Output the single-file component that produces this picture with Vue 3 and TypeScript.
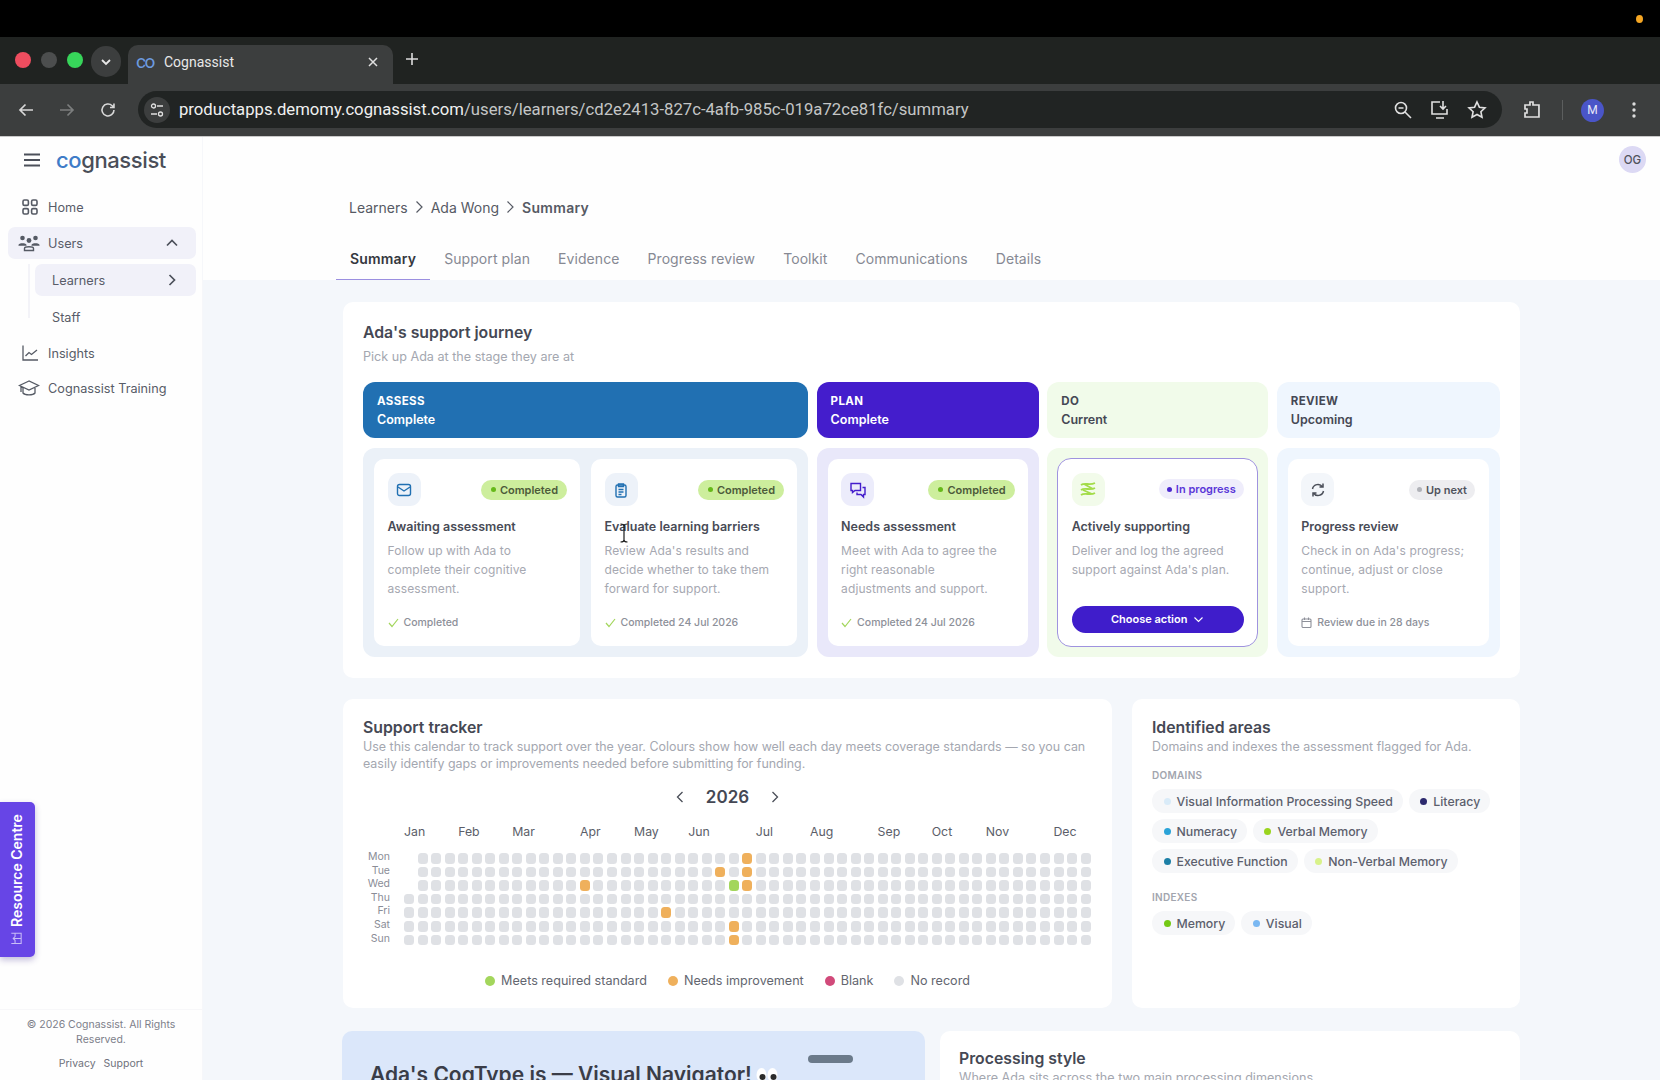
<script setup lang="ts">
type CardState = 'done' | 'active' | 'next'

interface JourneyCard {
  icon: string
  badge: string
  state: CardState
  title: string
  text: string
  foot?: string
}

interface Stage {
  key: string
  name: string
  status: string
  cards: JourneyCard[]
}

const tabs = ['Summary', 'Support plan', 'Evidence', 'Progress review', 'Toolkit', 'Communications', 'Details']

const stages: Stage[] = [
  {
    key: 'assess',
    name: 'ASSESS',
    status: 'Complete',
    cards: [
      {
        icon: 'mail',
        badge: 'Completed',
        state: 'done',
        title: 'Awaiting assessment',
        text: 'Follow up with Ada to complete their cognitive assessment.',
        foot: 'Completed',
      },
      {
        icon: 'clip',
        badge: 'Completed',
        state: 'done',
        title: 'Evaluate learning barriers',
        text: "Review Ada's results and decide whether to take them forward for support.",
        foot: 'Completed 24 Jul 2026',
      },
    ],
  },
  {
    key: 'plan',
    name: 'PLAN',
    status: 'Complete',
    cards: [
      {
        icon: 'chat',
        badge: 'Completed',
        state: 'done',
        title: 'Needs assessment',
        text: 'Meet with Ada to agree the right reasonable\nadjustments and support.',
        foot: 'Completed 24 Jul 2026',
      },
    ],
  },
  {
    key: 'do',
    name: 'DO',
    status: 'Current',
    cards: [
      {
        icon: 'wave',
        badge: 'In progress',
        state: 'active',
        title: 'Actively supporting',
        text: "Deliver and log the agreed support against Ada's plan.",
      },
    ],
  },
  {
    key: 'review',
    name: 'REVIEW',
    status: 'Upcoming',
    cards: [
      {
        icon: 'sync',
        badge: 'Up next',
        state: 'next',
        title: 'Progress review',
        text: "Check in on Ada's progress; continue, adjust or close support.",
        foot: 'Review due in 28 days',
      },
    ],
  },
]

const months = [
  ['Jan', 0], ['Feb', 4], ['Mar', 8], ['Apr', 13], ['May', 17], ['Jun', 21],
  ['Jul', 26], ['Aug', 30], ['Sep', 35], ['Oct', 39], ['Nov', 43], ['Dec', 48],
] as const

const days = ['Mon', 'Tue', 'Wed', 'Thu', 'Fri', 'Sat', 'Sun']

const marks: Record<string, string> = {
  '0-25': 'amber', '1-25': 'amber', '2-25': 'amber', '1-23': 'amber',
  '2-24': 'green', '2-13': 'amber', '4-19': 'amber', '5-24': 'amber', '6-24': 'amber',
}

function cellClass(row: number, col: number): string {
  if (col === 0 && row < 3) return 'empty'
  return marks[`${row}-${col}`] ?? ''
}

const legend = [
  ['green', 'Meets required standard'],
  ['amber', 'Needs improvement'],
  ['pink', 'Blank'],
  ['', 'No record'],
]

const domains = [
  ['#d9ebf8', 'Visual Information Processing Speed'],
  ['#2d2a6e', 'Literacy'],
  ['#2aa3d8', 'Numeracy'],
  ['#9ad41e', 'Verbal Memory'],
  ['#1c7fa6', 'Executive Function'],
  ['#d8f28a', 'Non-Verbal Memory'],
]

const indexes = [
  ['#74c914', 'Memory'],
  ['#7ab8f2', 'Visual'],
]
</script>

<template>
  <div class="screen">
    <div class="os-bar"><span class="os-dot"></span></div>

    <div class="tab-strip">
      <span class="light red"></span>
      <span class="light grey"></span>
      <span class="light lime"></span>
      <span class="tab-search">
        <svg width="14" height="14" viewBox="0 0 14 14"><path d="M3 5l4 4 4-4" fill="none" stroke="#e8e8e8" stroke-width="1.8" /></svg>
      </span>
      <div class="browser-tab">
        <span class="favicon">co</span>
        <span class="tab-title">Cognassist</span>
        <svg class="tab-close" width="12" height="12" viewBox="0 0 12 12"><path d="M2 2l8 8M10 2l-8 8" stroke="#e0e0e0" stroke-width="1.5" /></svg>
      </div>
      <svg class="tab-plus" width="14" height="14" viewBox="0 0 14 14"><path d="M7 1v12M1 7h12" stroke="#dcdcdc" stroke-width="1.6" /></svg>
    </div>

    <div class="toolbar">
      <svg class="nav-ico" width="18" height="18" viewBox="0 0 18 18"><path d="M16 9H3M8.5 3.5L3 9l5.5 5.5" fill="none" stroke="#d8d8d8" stroke-width="1.7" /></svg>
      <svg class="nav-ico" width="18" height="18" viewBox="0 0 18 18"><path d="M2 9h13M9.5 3.5L15 9l-5.5 5.5" fill="none" stroke="#7c7e7e" stroke-width="1.7" /></svg>
      <svg class="nav-ico" width="18" height="18" viewBox="0 0 18 18"><path d="M15 9a6 6 0 1 1-1.8-4.3L15 6.5M15 2.5v4h-4" fill="none" stroke="#d8d8d8" stroke-width="1.6" /></svg>
      <div class="address">
        <span class="site-info">
          <svg width="16" height="16" viewBox="0 0 16 16" fill="none" stroke="#e0e0e0" stroke-width="1.3">
            <circle cx="4.5" cy="4" r="2" /><path d="M8 4h6M2 12h6" /><circle cx="11.5" cy="12" r="2" />
          </svg>
        </span>
        <span class="url"><b>productapps.demomy.cognassist.com</b>/users/learners/cd2e2413-827c-4afb-985c-019a72ce81fc/summary</span>
        <span class="addr-icons">
          <svg width="20" height="20" viewBox="0 0 20 20" fill="none" stroke="#e0e0e0" stroke-width="1.6"><circle cx="8" cy="8" r="5.5" /><path d="M12 12l6 6M5.5 8h5" /></svg>
          <svg width="20" height="20" viewBox="0 0 20 20" fill="none" stroke="#e0e0e0" stroke-width="1.6"><path d="M10 2H2v12h15V9M6 18h8M13 1v8M10 6l3 3 3-3" /></svg>
          <svg width="20" height="20" viewBox="0 0 20 20" fill="none" stroke="#e0e0e0" stroke-width="1.6"><path d="M10 2l2.4 5.2 5.6.7-4.1 3.8 1.1 5.6-5-2.8-5 2.8 1.1-5.6L2 7.9l5.6-.7z" /></svg>
        </span>
      </div>
      <svg class="puzzle" width="20" height="20" viewBox="0 0 20 20" fill="none" stroke="#e0e0e0" stroke-width="1.7"><path d="M3 5h5V2h3v3h6v12H3v-4h2V9H3z" /></svg>
      <span class="tool-divider"></span>
      <span class="profile">M</span>
      <svg width="4" height="16" viewBox="0 0 4 16" fill="#dcdcdc"><circle cx="2" cy="2" r="1.7" /><circle cx="2" cy="8" r="1.7" /><circle cx="2" cy="14" r="1.7" /></svg>
    </div>

    <div class="app">
      <aside class="sidebar">
        <div class="brand">
          <svg width="16" height="14" viewBox="0 0 16 14"><path d="M0 1.5h16M0 7h16M0 12.5h16" stroke="#4c505a" stroke-width="1.9" /></svg>
          <span class="logo"><span class="logo-co">co</span>gnassist</span>
        </div>

        <nav class="nav">
          <a class="nav-row">
            <svg width="18" height="18" viewBox="0 0 18 18" fill="none" stroke="#555a64" stroke-width="1.6">
              <rect x="2" y="2" width="5.4" height="5.4" rx="1.4" /><rect x="10.6" y="2" width="5.4" height="5.4" rx="1.4" />
              <rect x="2" y="10.6" width="5.4" height="5.4" rx="1.4" /><rect x="10.6" y="10.6" width="5.4" height="5.4" rx="1.4" />
            </svg>
            Home
          </a>
          <a class="nav-row on">
            <svg width="22" height="18" viewBox="0 0 22 18" fill="#555a64">
              <circle cx="4.5" cy="4" r="2.3" /><circle cx="17.5" cy="4" r="2.3" /><circle cx="11" cy="6.5" r="2.4" />
              <path d="M0.5 11c0-2.5 8-2.5 8 0v.8h-8zM13.5 11c0-2.5 8-2.5 8 0v.8h-8z" />
              <path d="M6.5 16.5v-2c0-2.3 9-2.3 9 0v2z" fill="none" stroke="#555a64" stroke-width="1.4" />
            </svg>
            Users
            <svg class="row-chev" width="14" height="14" viewBox="0 0 14 14"><path d="M2 9.5L7 4.5l5 5" fill="none" stroke="#4c505a" stroke-width="1.7" /></svg>
          </a>
          <div class="sub-nav">
            <a class="nav-row on sub">
              Learners
              <svg class="row-chev" width="14" height="14" viewBox="0 0 14 14"><path d="M4.5 2l5 5-5 5" fill="none" stroke="#4c505a" stroke-width="1.7" /></svg>
            </a>
            <a class="nav-row sub">Staff</a>
          </div>
          <a class="nav-row">
            <svg width="18" height="18" viewBox="0 0 18 18" fill="none" stroke="#555a64" stroke-width="1.3"><path d="M2 1.5v14.5h15M4.5 12l3.5-3.5 2.5 2L16 6" /></svg>
            Insights
          </a>
          <a class="nav-row last">
            <svg width="22" height="18" viewBox="0 0 22 18" fill="none" stroke="#555a64" stroke-width="1.3"><path d="M11 2L1.5 6.5 11 11l9.5-4.5zM5 9v5c2 2.5 10 2.5 12 0V9M3 7.5V13" /></svg>
            Cognassist Training
          </a>
        </nav>

        <button class="resource" type="button">
          <svg width="14" height="14" viewBox="0 0 14 14" fill="none" stroke="#c9bdf7" stroke-width="1.1"><path d="M1.5 2v10.5h11V2M1.5 6h3.5l2-2 2 2h3.5M7 4v8.5" /></svg>
          Resource Centre
        </button>

        <footer class="side-foot">
          <p>© 2026 Cognassist. All Rights Reserved.</p>
          <div class="side-links"><span>Privacy</span><span>Support</span></div>
        </footer>
      </aside>

      <main class="main">
        <header class="page-head">
          <div class="user-row"><span class="avatar">OG</span></div>
          <div class="crumbs">
            <span>Learners</span>
            <svg width="9" height="14" viewBox="0 0 9 14"><path d="M1.5 1.5L7 7l-5.5 5.5" fill="none" stroke="#565a64" stroke-width="1.2" /></svg>
            <span>Ada Wong</span>
            <svg width="9" height="14" viewBox="0 0 9 14"><path d="M1.5 1.5L7 7l-5.5 5.5" fill="none" stroke="#565a64" stroke-width="1.2" /></svg>
            <strong>Summary</strong>
          </div>
          <div class="tabs">
            <span v-for="(tab, i) in tabs" :key="tab" class="tab" :class="{ current: i === 0 }">{{ tab }}</span>
          </div>
        </header>

        <div class="content">
          <section class="panel journey">
            <h2>Ada's support journey</h2>
            <p class="sub-text">Pick up Ada at the stage they are at</p>
            <div class="stages">
              <div v-for="stage in stages" :key="stage.key" class="stage" :class="stage.key">
                <div class="stage-head">
                  <span class="stage-name">{{ stage.name }}</span>
                  <span class="stage-status">{{ stage.status }}</span>
                </div>
                <div class="stage-body">
                  <article v-for="card in stage.cards" :key="card.title" class="card" :class="card.state">
                    <div class="card-top">
                      <span class="card-icon">
                        <svg v-if="card.icon === 'mail'" width="16" height="16" viewBox="0 0 16 16" fill="none" stroke="#2170b2" stroke-width="1.4"><rect x="1.5" y="2.5" width="13" height="11" rx="2" /><path d="M2 5l6 4 6-4" /></svg>
                        <svg v-else-if="card.icon === 'clip'" width="16" height="16" viewBox="0 0 16 16" fill="none" stroke="#2170b2" stroke-width="1.4"><rect x="3" y="3" width="10" height="12" rx="1.5" /><path d="M5.5 2h5v2.5h-5zM5.5 7.5h5M5.5 10h5M5.5 12.5h3" /></svg>
                        <svg v-else-if="card.icon === 'chat'" width="18" height="18" viewBox="0 0 18 18" fill="none" stroke="#441dcc" stroke-width="1.4"><path d="M2 2.5h9.5v7H6L3.5 11.5V9.5H2z" /><path d="M13.5 6.5H16v7h-1.5v2.5L12 13.5H8V11.5" /></svg>
                        <svg v-else-if="card.icon === 'wave'" width="18" height="18" viewBox="0 0 18 18" fill="none" stroke="#a3dc4a" stroke-width="1.8"><path d="M2 5c4-3 8 1 14-2M2 10c4-3 9 1 14-2M2 15c4-3 9 1 14-2M5 4l9 5M4 10l9 4" /></svg>
                        <svg v-else width="16" height="16" viewBox="0 0 16 16" fill="none" stroke="#4a4e58" stroke-width="1.5"><path d="M2.5 7a5.5 5.5 0 0 1 10-2M13.5 9a5.5 5.5 0 0 1-10 2M13 1.5V5H9.5M3 14.5V11h3.5" /></svg>
                      </span>
                      <span class="badge" :class="card.state"><i></i>{{ card.badge }}</span>
                    </div>
                    <h3>{{ card.title }}</h3>
                    <p class="card-text">{{ card.text }}</p>
                    <button v-if="card.state === 'active'" class="action" type="button">
                      Choose action
                      <svg width="11" height="11" viewBox="0 0 11 11"><path d="M1.5 3.5l4 4 4-4" fill="none" stroke="#fff" stroke-width="1.1" /></svg>
                    </button>
                    <div v-else class="card-foot">
                      <svg v-if="card.state === 'done'" width="11" height="11" viewBox="0 0 11 11"><path d="M1 6l3 3.5L10 2" fill="none" stroke="#a3d65c" stroke-width="1.2" /></svg>
                      <svg v-else width="11" height="11" viewBox="0 0 11 11" fill="none" stroke="#8d9099" stroke-width="1.1"><rect x="1" y="2" width="9" height="8.5" rx="1" /><path d="M1 4.5h9M3.5 0.5v2.5M7.5 0.5v2.5" /></svg>
                      {{ card.foot }}
                    </div>
                  </article>
                </div>
              </div>
            </div>
          </section>

          <div class="row-two">
            <section class="panel tracker">
              <h2>Support tracker</h2>
              <p class="sub-text tight">Use this calendar to track support over the year. Colours show how well each day meets coverage standards — so you can easily identify gaps or improvements needed before submitting for funding.</p>
              <div class="year">
                <svg width="10" height="14" viewBox="0 0 10 14"><path d="M7.5 2L2.5 7l5 5" fill="none" stroke="#4a4e58" stroke-width="1.3" /></svg>
                <span>2026</span>
                <svg width="10" height="14" viewBox="0 0 10 14"><path d="M2.5 2l5 5-5 5" fill="none" stroke="#4a4e58" stroke-width="1.3" /></svg>
              </div>
              <div class="months">
                <span v-for="[name, week] in months" :key="name" :style="{ gridColumnStart: week + 1 }">{{ name }}</span>
              </div>
              <div class="heat">
                <div v-for="(day, r) in days" :key="day" class="heat-row">
                  <span class="day">{{ day }}</span>
                  <span v-for="c in 51" :key="c" class="cell" :class="cellClass(r, c - 1)"></span>
                </div>
              </div>
              <div class="legend">
                <span v-for="[cls, label] in legend" :key="label" class="legend-item">
                  <i class="cell" :class="cls"></i>{{ label }}
                </span>
              </div>
            </section>

            <section class="panel areas">
              <h2>Identified areas</h2>
              <p class="sub-text tight">Domains and indexes the assessment flagged for Ada.</p>
              <h4>DOMAINS</h4>
              <div class="pills">
                <span v-for="[color, label] in domains" :key="label" class="pill">
                  <i :style="{ background: color }"></i>{{ label }}
                </span>
              </div>
              <h4 class="second">INDEXES</h4>
              <div class="pills">
                <span v-for="[color, label] in indexes" :key="label" class="pill">
                  <i :style="{ background: color }"></i>{{ label }}
                </span>
              </div>
            </section>
          </div>

          <div class="row-three">
            <section class="cogtype">
              <span class="handle"></span>
              <h2>Ada's CogType is — Visual Navigator!
                <svg width="24" height="16" viewBox="0 0 24 16">
                  <ellipse cx="6.5" cy="8" rx="5" ry="7" fill="#fff" /><ellipse cx="17.5" cy="8" rx="5" ry="7" fill="#fff" />
                  <circle cx="7.5" cy="10" r="3" fill="#2b2b2b" /><circle cx="18.5" cy="10" r="3" fill="#2b2b2b" />
                </svg>
              </h2>
            </section>
            <section class="panel processing">
              <h2>Processing style</h2>
              <p class="sub-text">Where Ada sits across the two main processing dimensions</p>
            </section>
          </div>
        </div>
      </main>
    </div>

    <svg class="ibeam" width="10" height="20" viewBox="0 0 10 20"><path d="M1.5 1c2 0 3.5 .5 3.5 2v14c0 1.5 1.5 2 3.5 2M8.5 1C6.5 1 5 1.5 5 3M5 17c0 1.5-1.5 2-3.5 2" fill="none" stroke="#1c1c1c" stroke-width="1.2" /></svg>
  </div>
</template>

<style>
html,
body {
  margin: 0;
  background: #fff;
}
</style>

<style scoped>
.screen {
  position: relative;
  width: 1660px;
  height: 1080px;
  overflow: hidden;
  display: flex;
  flex-direction: column;
  font-family: Inter, "Noto Sans", sans-serif;
  color: #454854;
}

h2, h3, h4, p {
  margin: 0;
}

.os-bar {
  height: 37px;
  background: #000;
  display: flex;
  justify-content: flex-end;
  align-items: center;
  padding-right: 17px;
}

.os-dot {
  width: 7px;
  height: 8px;
  border-radius: 50%;
  background: #f5a623;
}

.tab-strip {
  height: 47px;
  background: #202321;
  display: flex;
  align-items: flex-start;
  padding: 15px 0 0 15px;
  box-sizing: border-box;
  font-family: Roboto, sans-serif;
}

.light {
  width: 16px;
  height: 16px;
  border-radius: 50%;
  margin-right: 10px;
}

.light.red { background: #ee4d5f; }
.light.grey { background: #4c4e4e; }
.light.lime { background: #37d55a; }

.tab-search {
  width: 30px;
  height: 31px;
  margin: -6px 7px 0 -2px;
  border-radius: 15px;
  background: #3c3e3e;
  display: flex;
  align-items: center;
  justify-content: center;
}

.browser-tab {
  width: 265px;
  height: 39px;
  margin-top: -7px;
  background: #3c3e3e;
  border-radius: 10px 10px 0 0;
  display: flex;
  align-items: center;
  padding: 0 14px 6px 8px;
  box-sizing: border-box;
  gap: 8px;
}

.favicon {
  color: #6d9be0;
  font-size: 19px;
  line-height: 20px;
  font-weight: 400;
  letter-spacing: -1.5px;
  width: 20px;
}

.tab-title {
  color: #e8e8e8;
  font-size: 14px;
  flex: 1;
}

.tab-plus {
  margin: 0 0 0 12px;
}

.toolbar {
  height: 53px;
  background: #3c3e3e;
  border-bottom: 1px solid #c9c9c9;
  box-sizing: border-box;
  display: flex;
  align-items: center;
  padding: 0 24px 0 17px;
  font-family: Roboto, sans-serif;
}

.nav-ico {
  margin-right: 23px;
}

.nav-ico:nth-child(3) {
  margin-right: 21px;
}

.address {
  width: 1367px;
  height: 37px;
  margin-top: -1px;
  border-radius: 19px;
  background: #212423;
  display: flex;
  align-items: center;
  padding: 0 15px 0 6px;
  box-sizing: border-box;
}

.site-info {
  width: 26px;
  height: 26px;
  border-radius: 50%;
  background: #3c3e3e;
  display: flex;
  align-items: center;
  justify-content: center;
  margin-right: 9px;
}

.url {
  font-size: 16.7px;
  color: #c4c6c6;
  flex: 1;
  white-space: nowrap;
}

.url b {
  font-weight: 400;
  color: #f0f0f0;
}

.addr-icons {
  display: flex;
  gap: 17px;
}

.puzzle {
  margin-left: 20px;
}

.tool-divider {
  width: 1px;
  height: 20px;
  background: #5c5e5e;
  margin: 0 18px 0 20px;
}

.profile {
  width: 23px;
  height: 23px;
  border-radius: 50%;
  background: #4a55c8;
  color: #e8e8f8;
  font-size: 12px;
  display: flex;
  align-items: center;
  justify-content: center;
  margin-right: 28px;
}

.app {
  flex: 1;
  min-height: 0;
  display: grid;
  grid-template-columns: 203px 1fr;
  background: #fefefe;
}

.sidebar {
  position: relative;
  display: flex;
  flex-direction: column;
  border-right: 1px solid #f6f7fa;
  box-sizing: border-box;
}

.brand {
  display: flex;
  align-items: center;
  gap: 16px;
  padding-left: 24px;
  height: 45px;
  box-sizing: border-box;
}

.logo {
  font-size: 22px;
  font-weight: 500;
  color: #4a4e58;
  letter-spacing: -0.4px;
  line-height: 28px;
}

.logo-co {
  color: #3f7cc8;
}

.nav {
  margin: 9px 6px 0 8px;
  display: flex;
  flex-direction: column;
  gap: 4px;
}

.nav-row {
  height: 32px;
  display: flex;
  align-items: center;
  gap: 9px;
  padding: 0 17px 0 13px;
  box-sizing: border-box;
  border-radius: 7px;
  font-size: 12.7px;
  color: #585c68;
}

.nav-row.last {
  margin-top: -1px;
}

.nav-row svg[width="22"] {
  margin-left: -3px;
  margin-right: -1px;
}

.nav-row.on {
  background: #f1f1f9;
}

.row-chev {
  margin-left: auto;
}

.sub-nav {
  margin: 1px 0 0 27px;
  display: flex;
  flex-direction: column;
  gap: 5px;
  position: relative;
}

.sub-nav::before {
  content: "";
  position: absolute;
  left: -7px;
  top: 0;
  height: 54px;
  width: 2px;
  background: #f3f3f8;
}

.nav-row.sub {
  padding-left: 17px;
}

.resource {
  position: absolute;
  left: 0;
  top: 665px;
  width: 35px;
  height: 155px;
  border: 0;
  border-radius: 5px 0 0 5px;
  background: #6745e6;
  color: #fff;
  box-shadow: 0 -3px 6px rgba(60, 40, 140, .3);
  font-family: inherit;
  font-size: 14px;
  font-weight: 600;
  writing-mode: vertical-rl;
  transform: rotate(180deg);
  display: flex;
  align-items: center;
  justify-content: flex-start;
  gap: 5px;
  padding: 12px 0 12px 3px;
  box-sizing: border-box;
  white-space: nowrap;
}

.resource svg {
  transform: rotate(90deg);
}

.side-foot {
  margin-top: auto;
  height: 71px;
  box-sizing: border-box;
  padding: 7px 18px 0;
  border-top: 1px solid #f7f7f9;
  text-align: center;
  font-size: 10.5px;
  line-height: 15px;
  color: #7d808a;
}

.side-links {
  display: flex;
  justify-content: center;
  gap: 8px;
  margin-top: 9px;
  color: #6f727c;
}

.main {
  min-width: 0;
  overflow: hidden;
  background: #f4f7fb;
  display: flex;
  flex-direction: column;
}

.page-head {
  height: 143px;
  flex: none;
  box-sizing: border-box;
  background: #fefefe;
  padding: 9px 14px 0 133px;
}

.user-row {
  display: flex;
  justify-content: flex-end;
  height: 27px;
  margin-bottom: 22px;
}

.avatar {
  width: 27px;
  height: 27px;
  border-radius: 50%;
  background: #dcd9f4;
  color: #50535d;
  font-size: 11.5px;
  font-weight: 500;
  display: flex;
  align-items: center;
  justify-content: center;
}

.crumbs {
  display: flex;
  align-items: center;
  gap: 7px;
  height: 24px;
  padding-left: 13px;
  font-size: 14px;
  color: #565a64;
}

.crumbs strong {
  font-weight: 600;
  letter-spacing: .3px;
}

.tabs {
  display: flex;
  margin-top: 31px;
}

.tab {
  height: 30px;
  padding: 0 14px;
  box-sizing: border-box;
  line-height: 17px;
  font-size: 14px;
  letter-spacing: .08px;
  color: #868993;
  border-bottom: 1px solid transparent;
}

.tab.current {
  color: #35383f;
  font-weight: 600;
  letter-spacing: .17px;
  border-bottom-color: #9b8fe0;
}

.content {
  padding: 22px 140px 0;
  display: flex;
  flex-direction: column;
}

.panel {
  background: #fff;
  border-radius: 10px;
}

.panel h2 {
  font-size: 15.8px;
  line-height: 20px;
  font-weight: 600;
  color: #454854;
}

.sub-text {
  margin-top: 6px;
  font-size: 12.6px;
  line-height: 16px;
  color: #a4a7b0;
}

.sub-text.tight {
  margin-top: 0;
  font-size: 12.45px;
  line-height: 17px;
}

.journey {
  padding: 21px 20px 21px;
}

.stages {
  margin-top: 17px;
  display: grid;
  grid-template-columns: 445px 222px 221px 1fr;
  column-gap: 8.6px;
}

.stage {
  display: flex;
  flex-direction: column;
  gap: 10px;
  min-width: 0;
}

.stage-head {
  height: 56px;
  border-radius: 12px;
  padding: 0 14px;
  box-sizing: border-box;
  display: flex;
  flex-direction: column;
  justify-content: center;
  gap: 3px;
  color: #fff;
  line-height: 16px;
}

.stage-name {
  font-size: 11.5px;
  font-weight: 700;
  letter-spacing: .4px;
}

.stage-status {
  font-size: 12.5px;
  font-weight: 600;
}

.stage-body {
  height: 209px;
  border-radius: 12px;
  padding: 11px;
  box-sizing: border-box;
  display: flex;
  gap: 11px;
}

.assess .stage-head { background: #2170b2; }
.assess .stage-body { background: #ebf1f8; }
.plan .stage-head { background: #441dcc; }
.plan .stage-body { background: #e9e8fa; }
.do .stage-head { background: #f1fbea; color: #454854; }
.do .stage-body { background: #f1fbea; padding: 10px; }
.review .stage-head { background: #eff6fe; color: #454854; }
.review .stage-body { background: #eff6fe; }

.card {
  flex: 1;
  min-width: 0;
  background: #fff;
  border-radius: 10px;
  padding: 14px 14px 17px 13.5px;
  box-sizing: border-box;
  display: flex;
  flex-direction: column;
}

.card.active {
  border: 1.5px solid #9f93df;
  border-radius: 14px;
  padding: 13.5px;
}

.card-top {
  display: flex;
  align-items: center;
  justify-content: space-between;
}

.card-icon {
  width: 33px;
  height: 33px;
  border-radius: 11px;
  display: flex;
  align-items: center;
  justify-content: center;
  background: #edf2f9;
}

.plan .card-icon { background: #ececfb; }
.do .card-icon { background: #f2fbea; }
.review .card-icon { background: #f3f6fa; }

.badge {
  height: 20px;
  border-radius: 10px;
  display: flex;
  align-items: center;
  gap: 4px;
  padding: 0 8px;
  font-size: 11px;
  font-weight: 600;
  white-space: nowrap;
}

.badge i {
  width: 5px;
  height: 5px;
  border-radius: 50%;
}

.badge.done {
  background: #cdee9d;
  color: #4c5a3a;
  padding: 0 9px 0 10px;
  margin-right: -1px;
}
.badge.done i { background: #66b91a; }
.badge.active { background: #efedfb; color: #5a37d8; }
.badge.active i { background: #4a28cf; }
.badge.next { background: #ededf0; color: #50535d; }
.badge.next i { background: #b0b2b8; }

.card h3 {
  margin-top: 12px;
  font-size: 12.5px;
  line-height: 18px;
  font-weight: 600;
  color: #484b56;
  white-space: nowrap;
}

.card-text {
  margin-top: 5px;
  font-size: 12px;
  line-height: 19.2px;
  letter-spacing: .1px;
  color: #a6a8b1;
  white-space: pre-line;
}

.card-foot {
  margin-top: auto;
  display: flex;
  align-items: center;
  gap: 5px;
  height: 14px;
  font-size: 10.5px;
  font-weight: 500;
  color: #8d9099;
  white-space: nowrap;
}

.action {
  margin-top: auto;
  height: 27px;
  border: 0;
  border-radius: 14px;
  background: #3f1dcb;
  color: #fff;
  font-family: inherit;
  font-size: 11px;
  font-weight: 600;
  display: flex;
  align-items: center;
  justify-content: center;
  gap: 6px;
}

.row-two {
  margin-top: 21px;
  display: grid;
  grid-template-columns: 1fr 388px;
  gap: 20px;
}

.tracker {
  height: 309px;
  padding: 19px 20px 0;
  box-sizing: border-box;
}

.year {
  margin-top: 13px;
  height: 24px;
  display: flex;
  align-items: center;
  justify-content: center;
  gap: 21px;
  font-size: 17px;
  font-weight: 600;
  color: #454854;
}

.months {
  margin: 15px 0 0 41px;
  height: 16px;
  display: grid;
  grid-template-columns: repeat(51, 10px);
  column-gap: 3.54px;
  font-size: 12.3px;
  line-height: 16px;
  color: #5b5e69;
  white-space: nowrap;
}

.heat {
  margin-top: 13px;
  display: flex;
  flex-direction: column;
  gap: 3px;
}

.heat-row {
  display: flex;
  align-items: center;
  column-gap: 3.54px;
}

.day {
  width: 27px;
  margin-right: 10.5px;
  text-align: right;
  font-size: 10.5px;
  line-height: 10.6px;
  color: #8a8d97;
  position: relative;
  top: -1px;
}

.cell {
  flex: none;
  width: 10px;
  height: 10.6px;
  border-radius: 3.5px;
  background: #dfe1e5;
}

.cell.empty { background: transparent; }
.cell.amber { background: #efb05c; }
.cell.green { background: #a3d65c; }
.cell.pink { background: #d14a7a; }

.legend {
  margin-top: 28px;
  display: flex;
  justify-content: center;
  gap: 21px;
  font-size: 12.6px;
  line-height: 16px;
  color: #63666f;
}

.legend-item {
  display: flex;
  align-items: center;
  gap: 6px;
}

.legend-item .cell {
  display: block;
  width: 10px;
  height: 10px;
  border-radius: 50%;
}

.areas {
  padding: 19px 20px 0;
  box-sizing: border-box;
}

.areas h4 {
  margin-top: 14px;
  font-size: 10px;
  line-height: 12px;
  font-weight: 600;
  letter-spacing: .3px;
  color: #a2a5ae;
}

.areas h4.second {
  margin-top: 18px;
}

.pills {
  margin-top: 8px;
  display: flex;
  flex-wrap: wrap;
  gap: 6px;
}

.pill {
  height: 24px;
  border-radius: 12px;
  background: #f6f7f9;
  padding: 0 10px 0 11.5px;
  display: flex;
  align-items: center;
  gap: 6px;
  font-size: 12.3px;
  font-weight: 500;
  color: #5c5f6d;
  white-space: nowrap;
}

.pill i {
  width: 7px;
  height: 7px;
  border-radius: 50%;
}

.row-three {
  margin-top: 23px;
  display: grid;
  grid-template-columns: 583px 1fr;
  gap: 15px;
  margin-left: -1px;
}

.cogtype {
  position: relative;
  height: 120px;
  border-radius: 10px;
  background: #dbe7fa;
  padding: 31px 28px 0;
  box-sizing: border-box;
}

.cogtype h2 {
  display: flex;
  align-items: center;
  gap: 3px;
  font-size: 21px;
  line-height: 26px;
  font-weight: 600;
  color: #3a3d48;
  white-space: nowrap;
}

.handle {
  position: absolute;
  right: 72px;
  top: 24px;
  width: 45px;
  height: 8px;
  border-radius: 4px;
  background: #6b7a8a;
}

.processing {
  height: 120px;
  padding: 18px 19px 0;
  box-sizing: border-box;
}

.processing .sub-text {
  margin-top: 1px;
}

.ibeam {
  position: absolute;
  left: 619px;
  top: 523px;
}
</style>
